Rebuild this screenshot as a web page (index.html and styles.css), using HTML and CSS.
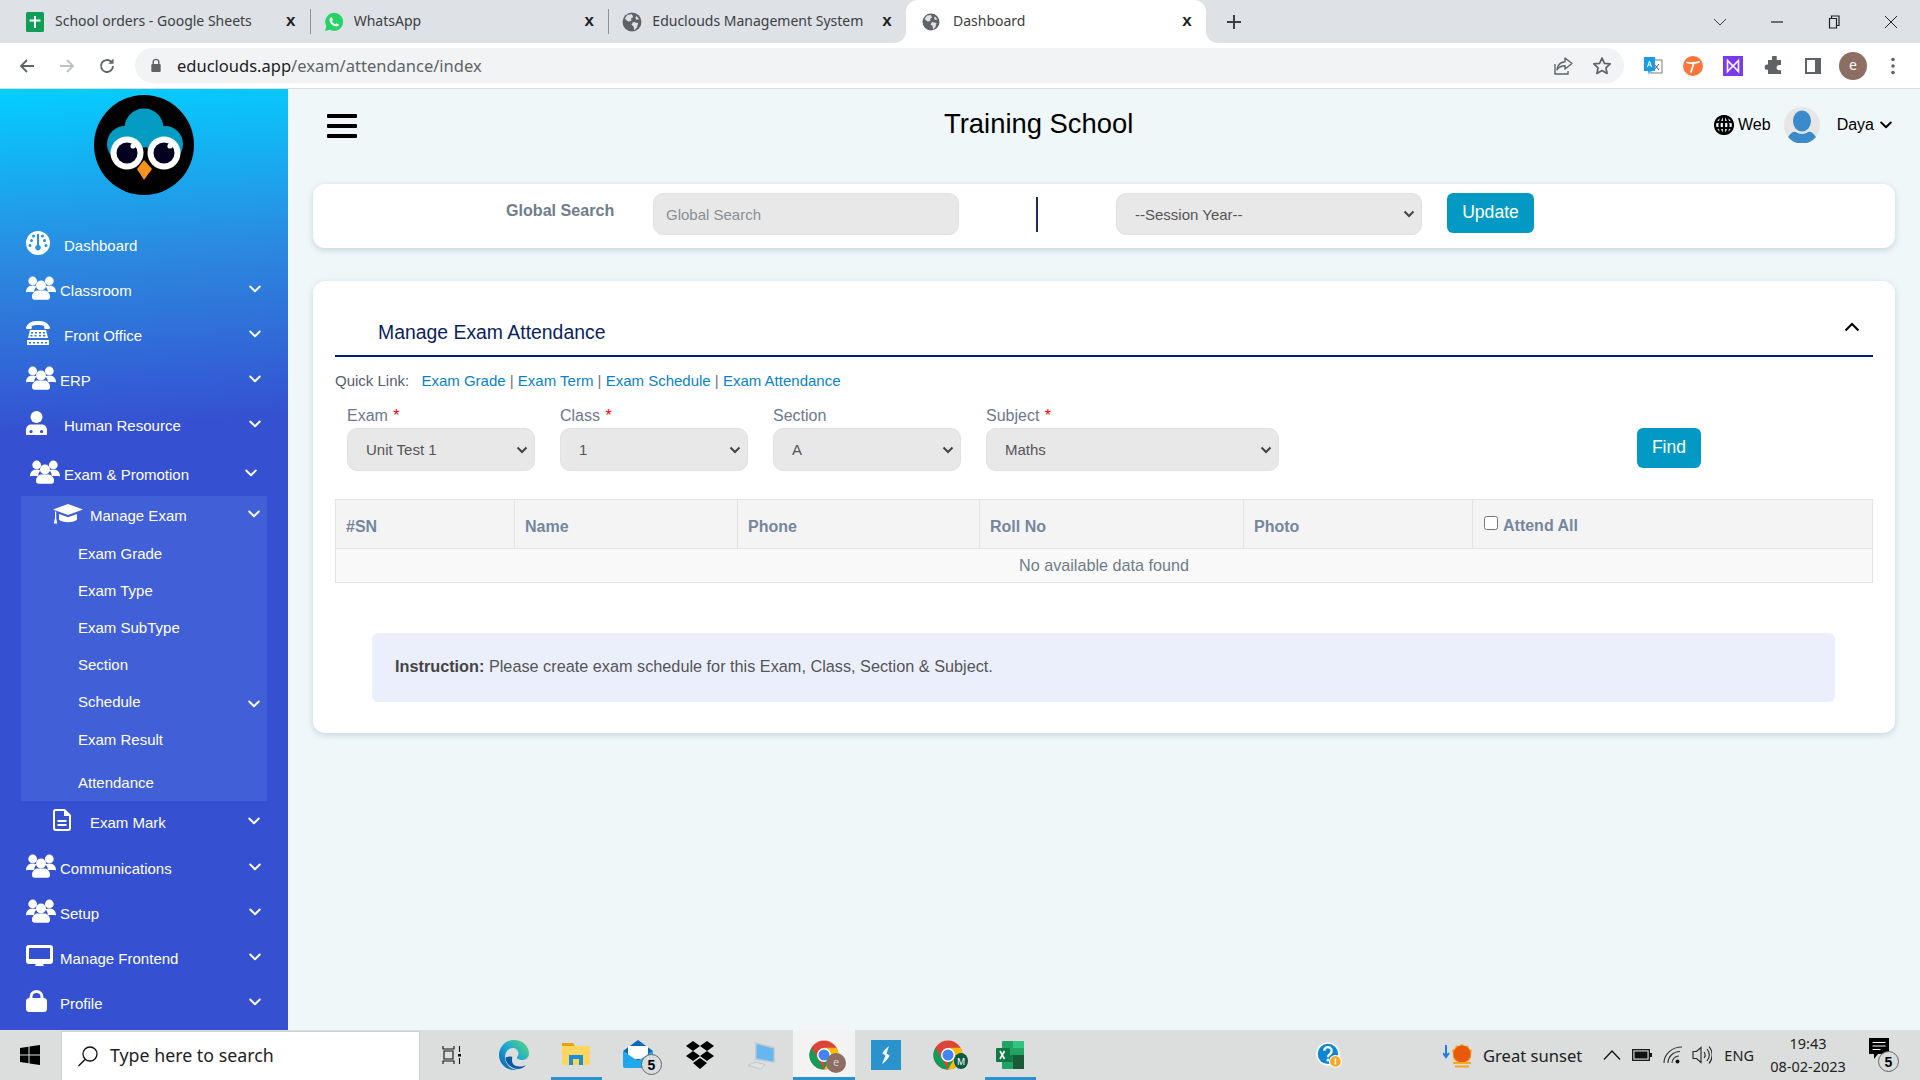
FILE: index.html
```html
<!DOCTYPE html>
<html lang="en">
<head>
<meta charset="utf-8">
<title>Dashboard</title>
<link rel="stylesheet" href="styles.css">
</head>
<body>
<svg class="defs" width="0" height="0" aria-hidden="true">
  <defs>
    <symbol id="users" viewBox="0 0 30 24">
      <circle cx="6.7" cy="5" r="4.4" fill="currentColor"/><circle cx="23.3" cy="5" r="4.4" fill="currentColor"/>
      <path fill="currentColor" d="M0 16c0-3.6 2.4-6.300 5.500-6.300h3c.9 0 1.700.2 2.400.6-1.700 1.300-2.600 3.300-2.800 5.700H1.500C.7 16 0 16.600 0 16zM30 16c0-3.600-2.400-6.300-5.500-6.300h-3c-.9 0-1.700.2-2.400.6 1.700 1.300 2.600 3.300 2.800 5.700h6.600c.8 0 1.500.6 1.500 0z"/>
      <circle cx="15" cy="9.500" r="5" fill="currentColor"/>
      <path fill="currentColor" d="M6 21c0-4 2.700-6.500 5.700-6.500h6.600c3 0 5.700 2.500 5.700 6.500 0 1.700-1 2.700-2.500 2.700h-13C7 23.700 6 22.700 6 21z"/>
    </symbol>
    <symbol id="chev" viewBox="0 0 12 8">
      <path d="M1.200 1.500 6 6.200l4.800-4.700" fill="none" stroke="currentColor" stroke-width="1.900" stroke-linecap="round" stroke-linejoin="round"/>
    </symbol>
    <symbol id="globe" viewBox="0 0 18 18">
      <circle cx="9" cy="9" r="8.500" fill="#5f6368"/>
      <path fill="#dee1e6" d="M5.500 2.500 9 2l1 2.500-2 1.500.5 2-3 .5-3-2.500 2.500-3.500zM10 9l4.500 1-1 4-2.500 2.500-.5-3.500-2-1.500zM13 3.500l2.500 3-2.500.5-1-2z"/>
    </symbol>
    <symbol id="chrome" viewBox="0 0 30 30">
      <circle cx="15" cy="15" r="14.500" fill="#db4437"/>
      <path fill="#0f9d58" d="M15 29.500A14.500 14.500 0 0 1 2.400 7.700L9 19z"/>
      <path fill="#0f9d58" d="M15 29.500 21 19l-6 0z"/>
      <path fill="#fbbc05" d="M15 29.500A14.500 14.500 0 0 0 27.600 7.800H15l6 11.200z"/>
      <circle cx="15" cy="15" r="7" fill="#fff"/><circle cx="15" cy="15" r="5.500" fill="#4285f4"/>
    </symbol>
  </defs>
</svg>

<header class="browser">
  <div class="tabstrip">
    <div class="tabs-left">
      <div class="tab">
        <svg class="tab-icon" viewBox="0 0 20 20"><rect x="1" width="18" height="20" rx="1.500" fill="#0f9d58"/><path d="M9 4h2v3.500h4.500v2H11V16H9V9.500H4.500v-2H9z" fill="#fff"/></svg>
        <span class="tab-title">School orders - Google Sheets</span>
        <span class="tab-x">x</span>
      </div>
      <span class="tab-sep"></span>
      <div class="tab">
        <svg class="tab-icon" viewBox="0 0 20 20"><path d="M1 19l1.300-4.800A9 9 0 1 1 5.800 17.700z" fill="#25d366"/><path d="M7 5.200c-.5 0-1.500.9-1.500 2.600 0 3.100 3.600 6.700 6.800 6.700 1.600 0 2.500-1 2.500-2l-2.400-1.300-1.100 1.100c-1.500-.5-2.800-1.800-3.300-3.200l1-1.200L7.800 5.400z" fill="#fff"/></svg>
        <span class="tab-title">WhatsApp</span>
        <span class="tab-x">x</span>
      </div>
      <span class="tab-sep"></span>
      <div class="tab tab-last">
        <svg class="tab-icon"><use href="#globe"/></svg>
        <span class="tab-title">Educlouds Management System</span>
        <span class="tab-x">x</span>
      </div>
    </div>
    <div class="tab tab-active">
      <svg class="tab-icon"><use href="#globe"/></svg>
      <span class="tab-title">Dashboard</span>
      <span class="tab-x">x</span>
    </div>
    <div class="tabs-right">
      <svg class="new-tab" viewBox="0 0 16 16"><path d="M8 1v14M1 8h14" stroke="#3c4043" stroke-width="2"/></svg>
      <div class="win-controls">
        <svg class="win-btn" viewBox="0 0 14 14"><path d="M1 4l6 6 6-6" fill="none" stroke="#3c4043"/></svg>
        <svg class="win-btn" viewBox="0 0 14 14"><path d="M1 7h12" stroke="#202124" stroke-width="1.200"/></svg>
        <svg class="win-btn" viewBox="0 0 14 14"><path d="M2.500 3.500h7v9.500h-7zM4.500 3.500V1h7.500v9.500H9.500" fill="none" stroke="#202124" stroke-width="1.200"/></svg>
        <svg class="win-btn" viewBox="0 0 14 14"><path d="M1 1l12 12M13 1 1 13" stroke="#202124"/></svg>
      </div>
    </div>
  </div>
  <div class="toolbar">
    <svg class="nav-btn" viewBox="0 0 18 18"><path d="M16 9H3M9 3 3 9l6 6" fill="none" stroke="#5f6368" stroke-width="1.800"/></svg>
    <svg class="nav-btn" viewBox="0 0 18 18"><path d="M2 9h13M9 3l6 6-6 6" fill="none" stroke="#bdc1c6" stroke-width="1.800"/></svg>
    <svg class="nav-btn" viewBox="0 0 18 18"><path d="M15 9a6 6 0 1 1-1.800-4.300" fill="none" stroke="#5f6368" stroke-width="1.800"/><path d="M15.500 1.500v5.200h-5.200z" fill="#5f6368"/></svg>
    <div class="omnibox">
      <svg class="lock" viewBox="0 0 12 16"><path d="M3 7V4.500a3 3 0 0 1 6 0V7" fill="none" stroke="#5f6368" stroke-width="1.500"/><rect x="1" y="6.500" width="10" height="8.500" rx="1.200" fill="#5f6368"/></svg>
      <span class="url"><span class="url-host">educlouds.app</span>/exam/attendance/index</span>
      <svg class="omni-icon omni-share" viewBox="0 0 20 20"><path d="M2 8v10h13v-3" fill="none" stroke="#5f6368" stroke-width="1.400"/><path d="M12 2l7 5.500-7 5.500V9.800c-3.500 0-6 1.200-8 4 .5-4.500 3.500-7.500 8-8z" fill="none" stroke="#5f6368" stroke-width="1.400" stroke-linejoin="round"/></svg>
      <svg class="omni-icon omni-star" viewBox="0 0 20 20"><path d="M10 2l2.400 5.300 5.800.6-4.300 3.900 1.200 5.700L10 14.600l-5.100 2.900 1.200-5.700L1.800 7.900l5.800-.6z" fill="none" stroke="#5f6368" stroke-width="1.700" stroke-linejoin="round"/></svg>
    </div>
    <div class="extensions">
      <svg class="ext" viewBox="0 0 20 20"><rect x="8" y="4" width="11" height="13" fill="#fff" stroke="#7a7a7a"/><path d="M11 8l5 6M16 8l-5 6" stroke="#555"/><path d="M1 1h11v14H7l-1 4-1-4H1z" fill="#1a9be8"/><path d="M4.500 11l2-6 2 6M5.200 9h2.600" fill="none" stroke="#fff"/></svg>
      <svg class="ext" viewBox="0 0 20 20"><circle cx="10" cy="10" r="10" fill="#f9763a"/><path d="M4 6.500c3 .8 8 .8 12-.6M11 6.500 8 16" fill="none" stroke="#fff" stroke-width="1.800" stroke-linecap="round"/></svg>
      <svg class="ext" viewBox="0 0 20 20"><rect width="20" height="20" fill="#7c3aed"/><path d="M4.500 4.500v11l5.500-5.500 5.500 5.500v-11L10 10z" fill="none" stroke="#fff" stroke-width="1.600"/></svg>
      <svg class="ext" viewBox="0 0 20 20"><path d="M8 1.500a2.400 2.400 0 0 1 4.800 0V4H17v5h-1.800a2.600 2.600 0 0 0 0 5.200H17V18H4v-4.200h-.8a2.600 2.600 0 0 1 0-5.200H4V4h4z" fill="#5f6368" transform="translate(1)"/></svg>
      <svg class="ext" viewBox="0 0 20 20"><path d="M2 2h16v16H2zM4 4v12h8V4z" fill="#5f6368" fill-rule="evenodd"/></svg>
      <span class="profile-e">e</span>
      <svg class="ext ext-dots" viewBox="0 0 20 20"><circle cx="10" cy="3.500" r="1.800" fill="#5f6368"/><circle cx="10" cy="10" r="1.800" fill="#5f6368"/><circle cx="10" cy="16.500" r="1.800" fill="#5f6368"/></svg>
    </div>
  </div>
</header>

<div class="app">
  <aside class="sidebar">
    <div class="logo-wrap">
      <svg class="logo" viewBox="0 0 100 100">
        <circle cx="50" cy="50" r="50" fill="#000"/>
        <g fill="#049cc2"><circle cx="50" cy="33" r="19.500"/><circle cx="31" cy="49" r="18"/><circle cx="71" cy="49" r="18"/></g>
        <circle cx="33" cy="58" r="16.500" fill="#fff"/><circle cx="70" cy="58" r="16.500" fill="#fff"/>
        <circle cx="33" cy="58" r="10.500" fill="#04001f"/><circle cx="70" cy="58" r="10.500" fill="#04001f"/>
        <circle cx="39" cy="51" r="2.600" fill="#fff"/><circle cx="76" cy="51" r="2.600" fill="#fff"/>
        <path d="M43 74l7-9 8 9-8 11z" fill="#f7931e"/>
      </svg>
    </div>
    <nav class="nav">
      <a class="nav-row nav-row-wide"><span class="ni"><svg class="ic-dash" viewBox="0 0 24 24"><path fill="#fff" fill-rule="evenodd" d="M12 0a12 12 0 1 1 0 24 12 12 0 0 1 0-24zM11 3v11a2.800 2.800 0 1 0 2 0V3zM5.500 8a1.500 1.500 0 1 0 0 3 1.500 1.500 0 0 0 0-3zM18.500 8a1.500 1.500 0 1 0 0 3 1.500 1.500 0 0 0 0-3zM4 13a1.500 1.500 0 1 0 0 3 1.500 1.500 0 0 0 0-3zM20 13a1.500 1.500 0 1 0 0 3 1.500 1.500 0 0 0 0-3zM7.500 3.500a1.500 1.500 0 1 0 0 3 1.500 1.500 0 0 0 0-3zM16.500 3.500a1.500 1.500 0 1 0 0 3 1.500 1.500 0 0 0 0-3z"/></svg></span><span class="nl">Dashboard</span></a>
      <a class="nav-row"><span class="ni"><svg class="ic-users"><use href="#users"/></svg></span><span class="nl">Classroom</span><svg class="nc"><use href="#chev"/></svg></a>
      <a class="nav-row nav-row-wide"><span class="ni"><svg class="ic-phone" viewBox="0 0 24 24"><path fill="#fff" d="M0 6.500C2 1 7 0 12 0s10 1 12 6.500c0 1-.6 1.500-1.500 1.500h-3c-.8 0-1.300-.6-1.300-1.300V5c-3.500-1.200-8.900-1.200-12.400 0v1.700c0 .7-.5 1.300-1.300 1.300h-3C.6 8 0 7.500 0 6.500z"/><path fill="#fff" fill-rule="evenodd" d="M4 9h16l2 8H2zM5 11v1.500h2V11zm4 0v1.500h2V11zm4 0v1.500h2V11zm4 0v1.500h2V11zM4.500 14v1.500h2V14zm4 0v1.500h2V14zm4.500 0v1.500h2V14zm4 0v1.500h2.500V14z"/><path fill="#fff" fill-rule="evenodd" d="M1 19h22v5H1zm2 2v1.500h2V21zm4 0v1.500h2V21zm4 0v1.500h2V21zm4 0v1.500h2V21zm4 0v1.500h2V21z"/></svg></span><span class="nl">Front Office</span><svg class="nc"><use href="#chev"/></svg></a>
      <a class="nav-row"><span class="ni"><svg class="ic-users"><use href="#users"/></svg></span><span class="nl">ERP</span><svg class="nc"><use href="#chev"/></svg></a>
      <a class="nav-row nav-row-wide"><span class="ni"><svg class="ic-doc" viewBox="0 0 21 24"><circle cx="10.500" cy="6" r="6" fill="#fff"/><path fill="#fff" fill-rule="evenodd" d="M5 13.500h11c3 0 5 2.500 5 5.500v5H0v-5c0-3 2-5.500 5-5.500zM5 19a1.600 1.600 0 1 0 .1 0zM15.500 19a1.600 1.600 0 1 0 .1 0z"/></svg></span><span class="nl">Human Resource</span><svg class="nc"><use href="#chev"/></svg></a>
      <a class="nav-row nav-row-exam"><span class="ni"><svg class="ic-users"><use href="#users"/></svg></span><span class="nl">Exam &amp; Promotion</span><svg class="nc"><use href="#chev"/></svg></a>

      <div class="subpanel">
        <a class="sub-head"><svg class="ic-cap" viewBox="0 0 30 20"><path fill="#fff" d="M15 0l15 5.500-15 5.500L0 5.500z"/><path fill="#fff" d="M6 10l9 3.200L24 10v5.500C21 19 9 19 6 15.500z"/><path fill="#fff" d="M2 7.500h1.200V14l1 5.500H.8l1.200-5.500z"/></svg><span class="nl">Manage Exam</span><svg class="nc nc-sub"><use href="#chev"/></svg></a>
        <a class="sub-item">Exam Grade</a>
        <a class="sub-item">Exam Type</a>
        <a class="sub-item">Exam SubType</a>
        <a class="sub-item">Section</a>
        <a class="sub-item sub-item-sched">Schedule<svg class="nc nc-sub nc-low"><use href="#chev"/></svg></a>
        <a class="sub-item sub-item-result">Exam Result</a>
        <a class="sub-item sub-item-att">Attendance</a>
      </div>
      <a class="sub-head sub-head-mark"><svg class="ic-file" viewBox="0 0 18 22"><path fill="none" stroke="#fff" stroke-width="2" d="M2.500 1h9L17 6.500V19a2 2 0 0 1-2 2H3a2 2 0 0 1-2-2V2.500A1.500 1.500 0 0 1 2.500 1z"/><path fill="#fff" d="M11 1l6 6h-6zM4.500 11h9v2h-9zM4.500 15h9v2h-9z"/></svg><span class="nl">Exam Mark</span><svg class="nc nc-sub"><use href="#chev"/></svg></a>

      <a class="nav-row nav-row-first"><span class="ni"><svg class="ic-users"><use href="#users"/></svg></span><span class="nl">Communications</span><svg class="nc"><use href="#chev"/></svg></a>
      <a class="nav-row"><span class="ni"><svg class="ic-users"><use href="#users"/></svg></span><span class="nl">Setup</span><svg class="nc"><use href="#chev"/></svg></a>
      <a class="nav-row"><span class="ni"><svg class="ic-users ic-monitor" viewBox="0 0 27 22"><path fill="#fff" fill-rule="evenodd" d="M3 0h21a3 3 0 0 1 3 3v13a3 3 0 0 1-3 3h-7l1 2H9l1-2H3a3 3 0 0 1-3-3V3a3 3 0 0 1 3-3zm0 3v11h21V3z"/></svg></span><span class="nl">Manage Frontend</span><svg class="nc"><use href="#chev"/></svg></a>
      <a class="nav-row"><span class="ni"><svg class="ic-lock" viewBox="0 0 21 22"><path fill="none" stroke="#fff" stroke-width="3" d="M5 10V7a5.500 5.500 0 0 1 11 0v3"/><rect y="8" width="21" height="14" rx="3.500" fill="#fff"/></svg></span><span class="nl">Profile</span><svg class="nc"><use href="#chev"/></svg></a>
    </nav>
  </aside>

  <main class="main">
    <div class="topbar">
      <div class="hamburger"><span></span><span></span><span></span></div>
      <h1 class="school">Training School</h1>
      <div class="top-right">
        <svg class="web-globe" viewBox="0 0 20 20"><circle cx="10" cy="10" r="9" fill="none" stroke="#000" stroke-width="2.200"/><ellipse cx="10" cy="10" rx="4.500" ry="9" fill="none" stroke="#000" stroke-width="2.200"/><path d="M1 7h18M1 13h18M10 1v18" stroke="#000" stroke-width="2.200"/></svg>
        <span class="web">Web</span>
        <svg class="avatar" viewBox="0 0 36 36"><circle cx="18" cy="18" r="18" fill="#e6e6e6"/><ellipse cx="18" cy="14" rx="9" ry="10.500" fill="#3b8bcb"/><path d="M4 30c3-5 6-6 8-5 3 2.500 9 2.500 12 0 2-1 5 0 8 5a18 18 0 0 1-28 0z" fill="#3b8bcb"/></svg>
        <span class="user">Daya</span>
        <svg class="user-chev"><use href="#chev"/></svg>
      </div>
    </div>

    <section class="card search-card">
      <label class="gs-label">Global Search</label>
      <input class="gs-input" type="text" placeholder="Global Search">
      <span class="gs-divider"></span>
      <select class="field field-session"><option>--Session Year--</option></select>
      <button class="btn btn-update">Update</button>
    </section>

    <section class="card panel">
      <div class="panel-head">
        <h2 class="panel-title">Manage Exam Attendance</h2>
        <svg class="panel-toggle" viewBox="0 0 16 10"><path d="M1.500 8.500 8 2l6.500 6.500" fill="none" stroke="#000" stroke-width="2"/></svg>
      </div>
      <p class="quick">Quick Link: <span class="quick-links"><a>Exam Grade</a> | <a>Exam Term</a> | <a>Exam Schedule</a> | <a>Exam Attendance</a></span></p>
      <form class="filters">
        <div class="fg fg-exam"><label class="fl">Exam <i>*</i></label><select class="field"><option>Unit Test 1</option></select></div>
        <div class="fg fg-class"><label class="fl">Class <i>*</i></label><select class="field"><option>1</option></select></div>
        <div class="fg fg-section"><label class="fl">Section</label><select class="field"><option>A</option></select></div>
        <div class="fg fg-subject"><label class="fl">Subject <i>*</i></label><select class="field"><option>Maths</option></select></div>
        <button class="btn btn-find" type="button">Find</button>
      </form>
      <table class="data">
        <thead>
          <tr>
            <th class="c-sn">#SN</th><th class="c-name">Name</th><th class="c-phone">Phone</th><th class="c-roll">Roll No</th><th class="c-photo">Photo</th>
            <th class="c-att"><input class="chk" type="checkbox">Attend All</th>
          </tr>
        </thead>
        <tbody><tr><td colspan="6">No available data found</td></tr></tbody>
      </table>
      <div class="instruction"><span class="instruction-text"><b>Instruction:</b> Please create exam schedule for this Exam, Class, Section &amp; Subject.</span></div>
    </section>
  </main>
</div>

<footer class="taskbar">
  <svg class="start" viewBox="0 0 20 20"><path d="M0 3l8.500-1.200V9.500H0zM9.500 1.600 20 0v9.500H9.500zM0 10.500h8.500v7.700L0 17zM9.500 10.500H20V20L9.500 18.400z" fill="#000"/></svg>
  <div class="search-box">
    <svg class="search-ic" viewBox="0 0 22 22"><circle cx="13" cy="9" r="7" fill="none" stroke="#111" stroke-width="1.300"/><path d="M8 14.500 1.500 21" stroke="#111" stroke-width="1.500"/></svg>
    <span class="search-text">Type here to search</span>
  </div>
  <div class="slots">
    <div class="slot slot-view"><svg class="ti-view" viewBox="0 0 20 20"><path d="M1 1v3h11V1M1 19v-3h11v3M2 6h9v8H2zM17.500 1v6M17.500 13v6" fill="none" stroke="#111" stroke-width="1.100"/><rect x="16" y="9" width="3" height="2.500" fill="#111"/></svg></div>
    <div class="slot"><svg class="ti" viewBox="0 0 30 30"><defs><linearGradient id="eg" x1="0" y1="1" x2="1" y2="0"><stop offset="0" stop-color="#0c59a4"/><stop offset=".5" stop-color="#1ba8d8"/><stop offset="1" stop-color="#5fdc6a"/></linearGradient></defs><path fill="url(#eg)" d="M15 0c8.500 0 15 6 15 13.500 0 4-3.200 6.500-7 6.500-3 0-5.200-1-5.200-2.500 0-1 1.700-1.300 1.700-3.800C19.500 10.500 17 8 14 8 9 8 6 12.500 6 17c0 7 5.500 12 11 12.500 1 .1 4 .2 6.500-1.500-2 1.300-5 2-8.500 2C6.500 30 0 23 0 15S6.500 0 15 0z"/><path fill="#0c59a4" d="M6.500 18c.5 6 6.500 11 12 11 3.500 0 6.500-1.500 8.500-4-2 1-4 1.500-6.500 1.500-5 0-7.500-3-7.500-6 0-3 1-4-2-4-2.500 0-4.500 1-4.500 1.500z"/></svg></div>
    <div class="slot slot-on slot-inset"><svg class="ti" viewBox="0 0 30 30"><path fill="#e8a200" d="M1 3h11l2 3H1z"/><path fill="#ffd75e" d="M1 6h28v18a1 1 0 0 1-1 1H2a1 1 0 0 1-1-1z"/><path fill="#1b8fd8" d="M8 15h14v10h-4v-6h-6v6H8z"/></svg></div>
    <div class="slot"><svg class="ti" viewBox="0 0 30 30"><path fill="#0a69b8" d="M0 11 15 0l15 11-15 10z"/><path fill="#fff" d="M5 6h20v13H5z"/><path fill="#1ea7ea" d="M0 11l15 10 15-10v15a2 2 0 0 1-2 2H2a2 2 0 0 1-2-2z"/></svg><span class="badge badge-mail">5</span></div>
    <div class="slot"><svg class="ti" viewBox="0 0 30 30"><path fill="#000" d="M8 1l7 5-7 5-7-5zM22 1l7 5-7 5-7-5zM8 11l7 5-7 5-7-5zM22 11l7 5-7 5-7-5zM15 18l7 5-7 6-7-6z"/></svg></div>
    <div class="slot"><svg class="ti" viewBox="0 0 30 30"><path fill="#c4ccd2" d="M8 2l20 5v16l-20-3z"/><path fill="#67b7ef" d="M9.500 4 26.500 8.500v13L9.500 18.500z"/><path fill="#dfe3e5" stroke="#aeb5ba" stroke-width=".6" d="M8 22l10 2.500-4 4.500L1 25.500z"/></svg></div>
    <div class="slot slot-on slot-chrome"><svg class="ti"><use href="#chrome"/></svg><span class="pbadge">e</span></div>
    <div class="slot"><svg class="ti" viewBox="0 0 30 30"><rect width="30" height="30" fill="#2b93cc"/><path fill="#fff" d="M18 6c-3 2.500-6 5-6.500 7.500l3 2-3.500 8.500c3-2 6.500-5.500 7.500-8.500l-3-2z"/></svg></div>
    <div class="slot"><svg class="ti"><use href="#chrome"/></svg><span class="pbadge pbadge-m">M</span></div>
    <div class="slot slot-on slot-inset"><svg class="ti" viewBox="0 0 30 30"><rect x="7" y="1" width="22" height="28" rx="1" fill="#21a366"/><rect x="18" y="1" width="11" height="7" fill="#33c481"/><rect x="7" y="15" width="11" height="7" fill="#107c41"/><rect x="18" y="15" width="11" height="14" fill="#185c37"/><rect x="1" y="8" width="14" height="14" rx="1" fill="#0f7b42"/><path d="M5 11l4.500 8M9.500 11 5 19" stroke="#fff" stroke-width="1.600"/></svg></div>
  </div>
  <svg class="help" viewBox="0 0 24 28"><circle cx="11" cy="13" r="11" fill="#fff"/><circle cx="11" cy="13" r="9.500" fill="#0e86d4"/><path d="M7.500 10a3.500 3.500 0 1 1 5.500 3c-1.300.8-2 1.300-2 3" fill="none" stroke="#fff" stroke-width="2.200"/><rect x="9.800" y="17.500" width="2.400" height="2.400" fill="#fff"/><circle cx="18" cy="20" r="5.500" fill="#f5a623" stroke="#fff"/><rect x="17.300" y="17" width="1.400" height="6" fill="#fff"/></svg>
  <svg class="weather" viewBox="0 0 30 26"><path d="M3 3v11M0 11l3 4 3-4" fill="none" stroke="#1f7fe0" stroke-width="2"/><path d="M19 2l3 2 3-.5 1 3 3 2-1 3c1 5-2 9-9 9s-10-4-9-9l-1-3 3-2 1-3 3 .5z" fill="#f59a23"/><circle cx="19" cy="12" r="8.500" fill="#e8590c"/><path d="M10 21h18M12 24.500h14" stroke="#f5a623" stroke-width="2"/></svg>
  <span class="weather-text">Great sunset</span>
  <svg class="tray tray-up" viewBox="0 0 18 12"><path d="M1 10.500 9 2l8 8.500" fill="none" stroke="#111" stroke-width="1.300"/></svg>
  <svg class="tray tray-bat" viewBox="0 0 20 12"><rect x=".7" y=".7" width="16.600" height="10.600" fill="none" stroke="#111" stroke-width="1.300"/><rect x="2.500" y="2.500" width="13" height="7" fill="#111"/><rect x="18" y="4" width="2" height="4" fill="#111"/></svg>
  <svg class="tray tray-wifi" viewBox="0 0 20 20"><path d="M1 18C1 9 9 2 19 2M5 18c0-6 5-11.500 12-11.500M9 18c0-3.500 3-7 7-7" fill="none" stroke="#333" stroke-width="1.100"/><circle cx="14.500" cy="16.500" r="2" fill="#111"/></svg>
  <svg class="tray tray-vol" viewBox="0 0 20 20"><path d="M1 6.500h3.500L9 2.500v15l-4.500-4H1z" fill="none" stroke="#222" stroke-width="1.100"/><path d="M12 7a5 5 0 0 1 0 6M15 4a9 9 0 0 1 0 12M17 1.500a13 13 0 0 1 0 17" fill="none" stroke="#222" stroke-width="1.100"/></svg>
  <span class="eng">ENG</span>
  <div class="clock"><span>19:43</span><span>08-02-2023</span></div>
  <div class="notif">
    <svg class="notif-ic" viewBox="0 0 20 22"><path d="M0 0h20v16H9l-4 5v-5H0z" fill="#000"/><path d="M3.500 4.500h13M3.500 8h13M3.500 11.500h8" stroke="#fff"/></svg>
    <span class="badge badge-notif">5</span>
  </div>
</footer>
</body>
</html>
```
FILE: styles.css
```css
* { box-sizing: border-box; }
html, body { margin: 0; height: 100%; }
body {
  width: 1920px; height: 1080px; overflow: hidden;
  display: flex; flex-direction: column;
  font-family: "Liberation Sans", Arial, sans-serif;
  background: #eff7f9;
}
.defs { display: block; }
a { color: inherit; text-decoration: none; }
button { font-family: inherit; }

/* browser chrome */
.browser { flex: none; height: 89px; background: #fff; font-family: "Noto Sans", sans-serif; }
.tabstrip { height: 43px; display: flex; background: linear-gradient(#dee1e6 0 50%, #fff 50%); }
.tabs-left { display: flex; align-items: center; width: 906px; padding-left: 12px; background: #dee1e6; border-bottom-right-radius: 12px; }
.tab { position: relative; display: flex; align-items: center; width: 298px; height: 43px; padding: 0 13px; color: #3c4043; }
.tab-last { width: 297px; }
.tab-active { width: 300px; padding: 0 13px 0 16px; background: #fff; border-radius: 12px 12px 0 0; color: #3c4043; }
.tab-icon { flex: none; width: 20px; height: 20px; }
.tab-active .tab-icon { width: 18px; height: 18px; margin-right: 13px; }
.tab-title { flex: 1; margin: 0 0 2px 10px; font-size: 14px; white-space: nowrap; overflow: hidden; }
.tab-active .tab-title { margin-left: 0; }
.tab-x { flex: none; width: 16px; margin: 0 -2px 2px 0; font: 700 17px/1 "Liberation Sans", sans-serif; color: #202124; text-align: center; }
.tab-sep { flex: none; width: 1px; height: 25px; background: #8f9296; }
.tabs-right { flex: 1; display: flex; align-items: center; background: #dee1e6; border-bottom-left-radius: 12px; }
.new-tab { width: 16px; height: 16px; margin-left: 20px; }
.win-controls { display: flex; align-items: center; margin-left: auto; margin-right: 22px; gap: 43px; }
.win-btn { width: 14px; height: 14px; }
.toolbar { height: 46px; display: flex; align-items: center; padding-left: 18px; border-bottom: 1px solid #dadce0; }
.nav-btn { width: 18px; height: 18px; margin-right: 22px; }
.nav-btn:nth-child(3) { margin-right: 19px; }
.omnibox { width: 1489px; height: 35px; display: flex; align-items: center; padding-left: 15px; background: #f1f3f4; border-radius: 18px; }
.lock { width: 12px; height: 15px; }
.url { margin-left: 15px; font-size: 16.500px; color: #5f6368; white-space: nowrap; }
.url-host { color: #202124; }
.omni-icon { width: 20px; height: 20px; }
.omni-share { margin-left: auto; }
.omni-star { margin: 0 12px 0 19px; }
.extensions { display: flex; align-items: center; margin-left: 19px; }
.ext { width: 20px; height: 20px; margin-right: 20px; }
.profile-e { width: 28px; height: 28px; margin: 0 11px 0 -4px; border-radius: 50%; background: #8d6e63; color: #fff; font-size: 14px; line-height: 26px; text-align: center; }
.ext-dots { margin: 0 0 0 5px; }

/* app */
.app { flex: none; height: 941px; display: flex; }
.sidebar {
  flex: none; width: 288px; overflow: hidden; color: #fff; font-size: 15px;
  background: linear-gradient(176deg, #03cffe 0, #2b8ae0 18%, #3551d1 36%, #3551d1 100%);
}
.logo-wrap { display: flex; justify-content: center; padding-top: 6px; }
.logo { display: block; width: 100px; height: 100px; }
.nav { margin-top: 28px; display: flex; flex-direction: column; }
.nav-row { display: flex; align-items: center; height: 45px; padding: 0 27px 0 26px; }
.ni { flex: none; display: flex; width: 34px; margin-bottom: 6px; }
.nav-row-wide .ni { width: 38px; }
.nl { flex: 1; white-space: nowrap; }
.nc { flex: none; width: 12px; height: 8px; margin-bottom: 4px; color: #fff; }
.ic-users { width: 30px; height: 24px; color: #fff; }
.ic-monitor { width: 27px; height: 22px; }
.ic-dash { width: 24px; height: 24px; }
.ic-phone { width: 24px; height: 24px; }
.ic-doc { width: 21px; height: 24px; }
.ic-lock { width: 21px; height: 22px; }
.nav-row-exam { height: 43px; margin-top: 5px; padding: 0 31px 0 30px; }
.subpanel { height: 305px; margin-left: 21px; width: 246px; background: #415fd6; }
.sub-head { display: flex; align-items: center; height: 39px; padding: 0 7px 0 32px; }
.ic-cap { flex: none; width: 30px; height: 20px; margin: 0 7px 4px 0; }
.ic-file { flex: none; width: 18px; height: 22px; margin: 0 19px 5px 0; }
.nc-sub { margin-bottom: 4px; }
.sub-item { display: flex; align-items: center; height: 37px; padding: 0 7px 0 57px; }
.sub-item-sched { justify-content: space-between; }
.nc-low { flex: none; margin: 4px 0 0; }
.sub-item-result { height: 38px; }
.sub-item-att { height: 43px; padding-top: 6px; }
.sub-head-mark { height: 43px; margin-left: 21px; width: 246px; }
.nav-row-first { margin-top: 2px; }

/* main */
.main { flex: 1; min-width: 0; padding: 0 25px; }
.topbar { height: 95px; display: flex; align-items: center; padding: 0 3px 24px 14px; }
.hamburger { display: flex; flex-direction: column; gap: 6px; width: 30px; margin-top: 2px; }
.hamburger span { display: block; height: 4px; border-radius: 1px; background: #000; }
.school { margin: 0 0 2px 587px; font-weight: 400; font-size: 27.400px; color: #000; white-space: nowrap; }
.top-right { display: flex; align-items: center; margin-left: auto; font-size: 16px; color: #000; }
.web-globe { width: 20px; height: 20px; margin-right: 4px; }
.web { margin-right: 13px; }
.avatar { width: 36px; height: 36px; margin-right: 17px; }
.user-chev { width: 12px; height: 8px; margin-left: 6px; color: #000; }
.card { background: #fff; border-radius: 12px; box-shadow: 0 2px 6px rgba(120, 150, 160, .35); }
.search-card { height: 64px; display: flex; align-items: flex-start; padding: 9px 0 0 193px; }
.gs-label { width: 147px; margin-top: 7px; font-size: 16.100px; font-weight: 700; color: #6f7d8c; line-height: 20px; }
.gs-input { width: 306px; height: 42px; padding: 0 12px; border: 1px solid #e1e1e1; border-radius: 10px; background: #e8e8e8; font: 15px "Liberation Sans", sans-serif; }
.gs-input::placeholder { color: #8a8f94; opacity: 1; }
.gs-divider { width: 2px; height: 35px; margin: 4px 78px 0 77px; background: #1c2a55; }
.field {
  width: 100%; height: 43px; padding: 0 12px 0 18px; border: 1px solid #e1e1e1; border-radius: 10px;
  appearance: none; color: #555; font: 15px "Liberation Sans", sans-serif;
  background: #e8e8e8 url("data:image/svg+xml,%3Csvg xmlns='http://www.w3.org/2000/svg' width='12' height='8' viewBox='0 0 12 8'%3E%3Cpath d='M1.500 1.500 6 6l4.500-4.500' fill='none' stroke='%23444' stroke-width='2'/%3E%3C/svg%3E") no-repeat right 6px center;
}
.field-session { width: 306px; height: 42px; }
.btn { border: 0; border-radius: 6px; padding: 0 0 2px; background: #029ac4; color: #fff; font-size: 17.600px; }
.btn-update { width: 87px; height: 40px; margin-left: 25px; }
.panel { height: 452px; margin-top: 33px; padding: 0 22px; }
.panel-head { height: 76px; display: flex; align-items: center; justify-content: space-between; padding: 28px 13px 0 43px; border-bottom: 2px solid #001e6e; }
.panel-title { margin: 0; font-size: 19.400px; font-weight: 400; color: #0a1f5c; }
.panel-toggle { width: 16px; height: 10px; margin-bottom: 11px; }
.quick { margin: 15px 0 0; height: 18px; line-height: 18px; font-size: 15px; color: #55606b; }
.quick-links { margin-left: 8px; color: #6b7680; }
.quick-links a { color: #0a83c4; }
.filters { display: flex; align-items: flex-end; gap: 25px; margin-top: 16px; padding-left: 12px; }
.fg { display: flex; flex-direction: column; }
.fg-exam { width: 188px; }
.fg-class { width: 188px; }
.fg-section { width: 188px; }
.fg-subject { width: 293px; }
.fl { height: 22px; font-size: 16px; line-height: 20px; color: #6c7a8a; }
.fl i { margin-left: 1px; color: #f00; font-style: normal; }
.btn-find { width: 64px; height: 40px; margin: 0 0 3px 333px; }
.data { width: 1538px; margin-top: 28px; border-collapse: collapse; table-layout: fixed; font-size: 16px; }
.data th { height: 49px; padding: 5px 10px 0; border: 1px solid #e3e3e3; background: #f4f4f4; color: #75879e; font-weight: 700; text-align: left; }
.data th.c-att { padding: 3px 10px 0; }
.data td { height: 34px; border: 1px solid #e3e3e3; background: #f9f9f9; color: #6f7d88; font-size: 16.200px; text-align: center; }
.c-sn { width: 179px; }
.c-name { width: 223px; }
.c-phone { width: 242px; }
.c-roll { width: 264px; }
.c-photo { width: 229px; }
.chk { width: 14px; height: 14px; margin: 0 5px 0 1px; vertical-align: 1px; }
.instruction { height: 69px; margin: 50px 38px 0 37px; padding: 0 23px 2px; border-radius: 6px; background: #ebeffc; display: flex; align-items: center; font-size: 16.250px; color: #555; }
.instruction b { color: #444; }

/* taskbar */
.taskbar { flex: none; height: 50px; display: flex; align-items: center; background: #dcdddd; font-family: "Noto Sans", sans-serif; color: #111; }
.start { width: 20px; height: 20px; margin: 0 21px 0 20px; }
.search-box { width: 359px; height: 49px; margin-top: 1px; display: flex; align-items: center; padding-left: 15px; background: #fff; border: 1px solid #cfd0d0; border-bottom: 0; }
.search-ic { width: 22px; height: 22px; }
.search-text { margin: 0 0 2px 11px; font-size: 17.800px; color: #222; white-space: nowrap; }
.slots { display: flex; height: 50px; }
.slot { position: relative; width: 62px; height: 50px; display: flex; align-items: center; justify-content: center; }
.slot-view { width: 63px; }
.ti { width: 30px; height: 30px; }
.ti-view { width: 20px; height: 20px; }
.slot-on::after { content: ""; position: absolute; left: 0; right: 0; bottom: 0; height: 3px; background: #2b93cc; }
.slot-inset::after { left: 6px; right: 5px; }
.slot-chrome { background: #f3f3f3; }
.badge { position: absolute; display: flex; align-items: center; justify-content: center; width: 21px; height: 21px; border: 1px solid #666; border-radius: 50%; background: #d8dcdf; font: 700 14px "Liberation Sans", sans-serif; color: #000; }
.badge-mail { left: 34px; top: 24px; }
.pbadge { position: absolute; left: 33px; top: 23px; width: 20px; height: 20px; border-radius: 50%; background: #8d6e63; color: #d8c8c0; font-size: 11px; line-height: 18px; text-align: center; }
.pbadge-m { left: 37px; background: #0b5a44; color: #fff; width: 14px; height: 16px; font-size: 9px; }
.help { width: 26px; height: 30px; margin-left: 275px; }
.weather { width: 30px; height: 26px; margin-left: 101px; }
.weather-text { margin-left: 10px; font-size: 16.600px; color: #222; white-space: nowrap; }
.tray { flex: none; }
.tray-up { width: 18px; height: 12px; margin-left: 21px; }
.tray-bat { width: 20px; height: 12px; margin-left: 11px; }
.tray-wifi { width: 20px; height: 20px; margin-left: 11px; }
.tray-vol { width: 20px; height: 20px; margin-left: 9px; }
.eng { margin-left: 12px; font-size: 14.500px; color: #222; }
.clock { width: 76px; margin-left: 16px; display: flex; flex-direction: column; align-items: center; gap: 6px; font-size: 14.500px; line-height: 17px; color: #222; white-space: nowrap; }
.notif { position: relative; width: 32px; height: 40px; margin-left: 22px; }
.notif-ic { position: absolute; left: 1px; top: 3px; width: 20px; height: 22px; }
.badge-notif { left: 10px; top: 16px; }
```
